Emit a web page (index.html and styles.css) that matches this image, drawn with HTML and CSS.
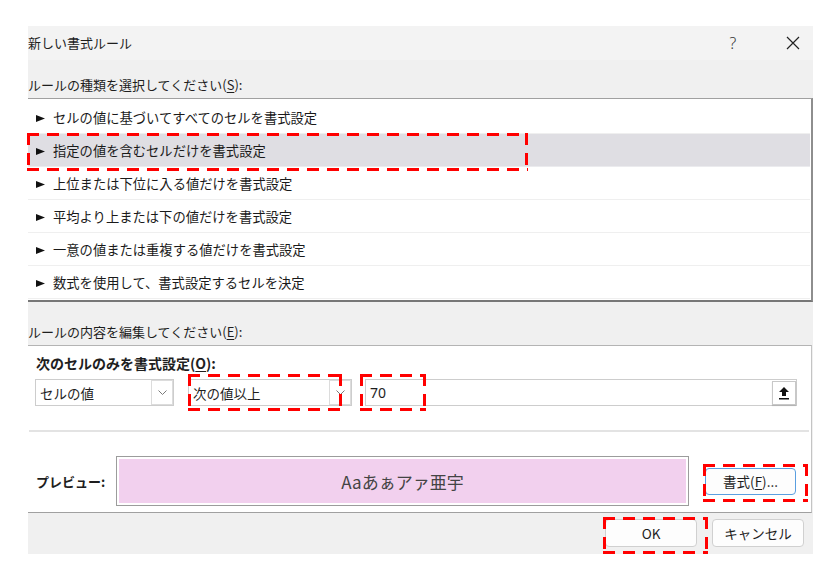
FILE: index.html
```html
<!DOCTYPE html>
<html lang="ja">
<head>
    <meta charset="UTF-8">
    <meta name="viewport" content="width=device-width, initial-scale=1.0">
    <title>新しい書式ルール</title>
    <link rel="stylesheet" href="styles.css">
</head>
<body>
    <div class="dialog">
        <div class="titlebar">
            <span class="title">新しい書式ルール</span>
            <div class="title-buttons">
                <span class="help">?</span>
                <span class="close">
                    <svg width="14" height="14" viewBox="0 0 14 14"><path d="M1 1L13 13M13 1L1 13" stroke="#222" stroke-width="1.2" fill="none"/></svg>
                </span>
            </div>
        </div>

        <div class="section-label">ルールの種類を選択してください(<u>S</u>):</div>
        <ul class="rule-list">
            <li><svg class="arrow" width="9" height="7" viewBox="0 0 9 7"><polygon points="0,0 9,3.5 0,7"/></svg>セルの値に基づいてすべてのセルを書式設定</li>
            <li class="selected"><svg class="arrow" width="9" height="7" viewBox="0 0 9 7"><polygon points="0,0 9,3.5 0,7"/></svg>指定の値を含むセルだけを書式設定<span class="mark mark-row"></span></li>
            <li><svg class="arrow" width="9" height="7" viewBox="0 0 9 7"><polygon points="0,0 9,3.5 0,7"/></svg>上位または下位に入る値だけを書式設定</li>
            <li><svg class="arrow" width="9" height="7" viewBox="0 0 9 7"><polygon points="0,0 9,3.5 0,7"/></svg>平均より上または下の値だけを書式設定</li>
            <li><svg class="arrow" width="9" height="7" viewBox="0 0 9 7"><polygon points="0,0 9,3.5 0,7"/></svg>一意の値または重複する値だけを書式設定</li>
            <li><svg class="arrow" width="9" height="7" viewBox="0 0 9 7"><polygon points="0,0 9,3.5 0,7"/></svg>数式を使用して、書式設定するセルを決定</li>
        </ul>

        <div class="section-label label-edit">ルールの内容を編集してください(<u>E</u>):</div>
        <div class="edit-panel">
            <div class="edit-title">次のセルのみを書式設定(<u>O</u>):</div>
            <div class="condition-row">
                <div class="combo combo-type">
                    <span class="combo-text">セルの値</span>
                    <span class="combo-btn"><svg width="9" height="5" viewBox="0 0 9 5"><polyline points="0.5,0.5 4.5,4.5 8.5,0.5" stroke="#7a7a7a" fill="none"/></svg></span>
                </div>
                <div class="combo combo-op">
                    <span class="combo-text">次の値以上</span>
                    <span class="combo-btn"><svg width="9" height="5" viewBox="0 0 9 5"><polyline points="0.5,0.5 4.5,4.5 8.5,0.5" stroke="#7a7a7a" fill="none"/></svg></span>
                    <span class="mark mark-op"></span>
                </div>
                <div class="combo value-box">
                    <span class="combo-text">70</span>
                    <span class="ref-btn"><svg width="12" height="14" viewBox="0 0 12 14"><polygon points="6,1 11,6 8,6 8,10 4,10 4,6 1,6" fill="#111"/><rect x="1" y="12" width="10" height="1.5" fill="#111"/></svg></span>
                    <span class="mark mark-value"></span>
                </div>
            </div>
            <div class="divider"></div>
            <div class="preview-row">
                <span class="preview-label">プレビュー:</span>
                <div class="preview-box"><div class="preview-sample">Aaあぁアァ亜宇</div></div>
                <button class="btn btn-format">書式(<u>F</u>)...<span class="mark mark-format"></span></button>
            </div>
        </div>

        <div class="footer">
            <button class="btn btn-ok">OK<span class="mark mark-ok"></span></button>
            <button class="btn">キャンセル</button>
        </div>
    </div>
</body>
</html>
```

FILE: styles.css
```css
body {
    margin: 0;
    background: #fff;
    font-family: "Noto Sans CJK JP", sans-serif;
    font-size: 13px;
    color: #1e1e1e;
}
.dialog {
    width: 785px;
    margin: 26px 0 0 28px;
    background: #f0f0f0;
}
.titlebar {
    height: 34px;
    background: #f3f3f3;
    display: flex;
    align-items: center;
    justify-content: space-between;
}
.title {
    line-height: 16px;
}
.title-buttons {
    display: flex;
    gap: 20px;
}
.title-buttons span {
    width: 40px;
    height: 20px;
    display: flex;
    align-items: center;
    justify-content: center;
}
.help {
    font-family: "Noto Sans", sans-serif;
    font-size: 16px;
    font-weight: 300;
    color: #333;
}
.section-label {
    padding: 17px 0 5px;
    line-height: 16px;
}
.label-edit {
    padding-top: 22px;
}
u {
    text-underline-offset: 2px;
}

/* rule type list */
.rule-list {
    list-style: none;
    margin: 0;
    padding: 2px 0 1px;
    background: #fff;
    border-top: 1px solid #a0a0a0;
    border-right: 2px solid #8e8e8e;
    border-bottom: 2px solid #777;
}
.rule-list li {
    position: relative;
    height: 30px;
    margin-right: 1px;
    padding: 2px 0 0 8px;
    display: flex;
    align-items: center;
    border-bottom: 1px solid #efefef;
    font-size: 13.3px;
    line-height: 16px;
    color: #1a1a1a;
}
.rule-list li.selected {
    background: #dfdee3;
    border-bottom-color: #ebebee;
}
.arrow {
    margin-right: 8px;
    fill: #111;
}

/* edit area */
.edit-panel {
    background: #fff;
    margin-right: 1px;
    padding: 8px 0 6px;
    border-top: 1px solid #b4b4b4;
    border-right: 1px solid #c4c4c4;
    border-bottom: 1px solid #a0a0a0;
}
.edit-title {
    padding-left: 8px;
    font-size: 14px;
    font-weight: bold;
    line-height: 18px;
}
.condition-row {
    display: flex;
    margin-top: 7px;
    padding-left: 7px;
}
.combo {
    position: relative;
    box-sizing: border-box;
    height: 27px;
    display: flex;
    align-items: center;
    padding-left: 4px;
    border: 1px solid #cdcdcd;
    background: #fff;
    font-size: 13.5px;
}
.combo-text {
    flex: 1;
}
.combo-type {
    width: 139px;
}
.combo-op {
    width: 164px;
    margin-left: 14px;
}
.value-box {
    width: 432px;
    margin-left: 13px;
    font-family: "Noto Sans", "Noto Sans CJK JP", sans-serif;
    font-size: 14px;
}
.combo-btn {
    box-sizing: border-box;
    width: 22px;
    height: 25px;
    display: flex;
    align-items: center;
    justify-content: center;
    border: 1px solid #dcdcdc;
    background: #fff;
}
.ref-btn {
    box-sizing: border-box;
    width: 24px;
    height: 24px;
    display: flex;
    align-items: center;
    justify-content: center;
    border: 1px solid #c8c8c8;
    background: #fff;
    box-shadow: 0 1px 1px rgba(0, 0, 0, 0.12);
}
.divider {
    height: 2px;
    margin: 24px 2px 0 1px;
    background: #e3e3e3;
}
.preview-row {
    display: flex;
    align-items: center;
    margin-top: 24px;
    padding-left: 8px;
}
.preview-label {
    width: 80px;
    font-weight: bold;
}
.preview-box {
    box-sizing: border-box;
    width: 573px;
    height: 50px;
    padding: 2px;
    border: 1px solid #9c9c9c;
    background: #fff;
}
.preview-sample {
    height: 100%;
    display: flex;
    align-items: center;
    justify-content: center;
    background: #f2d0ee;
    color: #444;
    font-size: 17px;
}

/* buttons */
.btn {
    position: relative;
    box-sizing: border-box;
    width: 92px;
    height: 28px;
    padding: 0;
    border: 1px solid #d0d0d0;
    border-radius: 4px;
    background: #fdfdfd;
    font-family: inherit;
    font-size: 13.5px;
    color: #1e1e1e;
}
.btn-format {
    width: 91px;
    height: 27px;
    margin-left: 16px;
    border-color: #5a9fe0;
}
.footer {
    box-sizing: border-box;
    height: 41px;
    display: flex;
    justify-content: flex-end;
    gap: 15px;
    padding: 6px 9px 0 0;
}

/* red annotation boxes, long dashes drawn with gradients */
.mark {
    position: absolute;
    box-sizing: border-box;
    pointer-events: none;
    background:
        repeating-linear-gradient(90deg, #f00 0 12px, transparent 12px 20px) top / 100% 3px no-repeat,
        repeating-linear-gradient(90deg, #f00 0 12px, transparent 12px 20px) bottom / 100% 3px no-repeat,
        repeating-linear-gradient(180deg, #f00 0 12px, transparent 12px 20px) left / 3px 100% no-repeat,
        repeating-linear-gradient(180deg, #f00 0 12px, transparent 12px 20px) right / 3px 100% no-repeat;
}
.mark-row {
    left: -1px;
    top: -1px;
    width: 501px;
    height: 38px;
}
.mark-op {
    left: -1px;
    top: -6px;
    width: 154px;
    height: 37px;
}
.mark-value {
    left: -6px;
    top: -6px;
    width: 66px;
    height: 37px;
}
.mark-format {
    left: -3px;
    top: -5px;
    width: 105px;
    height: 38px;
}
.mark-ok {
    left: -3px;
    top: -3px;
    width: 105px;
    height: 37px;
}
```
